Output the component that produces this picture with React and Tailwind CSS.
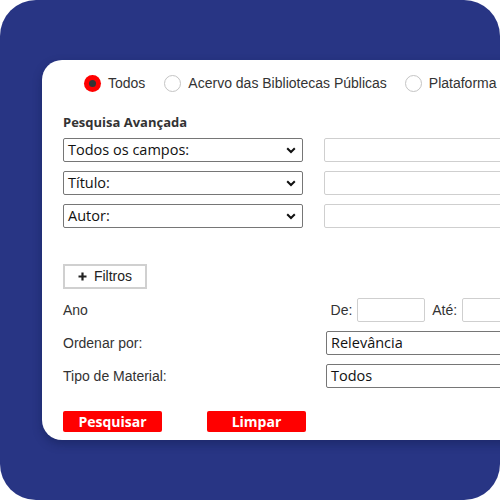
import React from 'react';

function Radio({ checked, label, className = '' }) {
  return (
    <label className={`flex items-center ${className}`}>
      {checked ? (
        <span className="flex h-[17px] w-[17px] items-center justify-center rounded-full bg-[#ff0000]">
          <span className="h-[7px] w-[7px] rounded-full bg-[#333333]" />
        </span>
      ) : (
        <span className="h-[17px] w-[17px] rounded-full border border-[#c4c4c4] bg-white" />
      )}
      <span className="ml-[7px] whitespace-nowrap text-[14px] text-[#333333]">{label}</span>
    </label>
  );
}

function Select({ value, className = '', arrow = true }) {
  return (
    <div
      className={`flex h-[24px] items-center justify-between rounded-[2px] border border-[#767676] bg-white pl-[4px] pr-[6px] ${className}`}
    >
      <span className="whitespace-nowrap text-[14.5px] leading-none text-[#111111] [font-family:'Open_Sans',sans-serif]">
        {value}
      </span>
      {arrow && (
        <svg width="10" height="7" viewBox="0 0 10 7" className="shrink-0">
          <path d="M1.2 1.2 L5 5 L8.8 1.2" fill="none" stroke="#111" strokeWidth="2" />
        </svg>
      )}
    </div>
  );
}

function TextInput({ className = '' }) {
  return <div className={`h-[24px] rounded-[2px] border border-[#cfcfcf] bg-white ${className}`} />;
}

export default function App() {
  return (
    <div className="h-[500px] w-[500px] bg-white [font-family:'Liberation_Sans',Arial,sans-serif]">
      <div className="h-[500px] w-[500px] overflow-hidden rounded-[36px] bg-[#283584] pl-[42px] pt-[60px]">
        <div className="h-[380px] w-[480px] rounded-l-[20px] bg-white pl-[21px] pt-[14px] shadow-[0_4px_10px_rgba(10,20,60,0.35)]">
          {/* radios */}
          <div className="ml-[21px] flex h-[18px] items-center">
            <Radio checked label="Todos" />
            <Radio label="Acervo das Bibliotecas Públicas" className="ml-[19px]" />
            <Radio label="Plataforma" className="ml-[18px]" />
          </div>

          <div className="mt-[22px] text-[13px] font-bold leading-[16px] text-[#333333] [font-family:'Open_Sans',sans-serif]">
            Pesquisa Avançada
          </div>

          <div className="mt-[8px] flex flex-col gap-[9px]">
            {['Todos os campos:', 'Título:', 'Autor:'].map((v) => (
              <div key={v} className="flex items-center">
                <Select value={v} className="w-[242px]" />
                <TextInput className="ml-[21px] w-[200px]" />
              </div>
            ))}
          </div>

          <button
            type="button"
            className="mt-[36px] flex h-[25px] w-[84px] items-center justify-center gap-[7px] border-2 border-[#d0d0d0] bg-white text-[14px] text-[#222222]"
          >
            <svg width="9" height="9" viewBox="0 0 9 9">
              <path d="M4.5 0.5 V8.5 M0.5 4.5 H8.5" stroke="#222" strokeWidth="2.2" />
            </svg>
            Filtros
          </button>

          <div className="mt-[9px] flex h-[24px] items-center text-[14px] text-[#333333]">
            <span className="w-[268px]">Ano</span>
            <span>De:</span>
            <TextInput className="ml-[5px] w-[68px]" />
            <span className="ml-[7px]">Até:</span>
            <TextInput className="ml-[5px] w-[60px]" />
          </div>

          <div className="mt-[9px] flex h-[24px] items-center text-[14px] text-[#333333]">
            <span className="w-[263px] shrink-0">Ordenar por:</span>
            <Select value="Relevância" className="w-[200px]" arrow={false} />
          </div>

          <div className="mt-[9px] flex h-[24px] items-center text-[14px] text-[#333333]">
            <span className="w-[263px] shrink-0">Tipo de Material:</span>
            <Select value="Todos" className="w-[200px]" arrow={false} />
          </div>

          <div className="mt-[23px] flex gap-[45px]">
            <button
              type="button"
              className="h-[21px] w-[99px] rounded-[2px] bg-[#ff0000] text-[14px] font-bold leading-none text-white [font-family:'Open_Sans',sans-serif]"
            >
              Pesquisar
            </button>
            <button
              type="button"
              className="h-[21px] w-[99px] rounded-[2px] bg-[#ff0000] text-[14px] font-bold leading-none text-white [font-family:'Open_Sans',sans-serif]"
            >
              Limpar
            </button>
          </div>
        </div>
      </div>
    </div>
  );
}
